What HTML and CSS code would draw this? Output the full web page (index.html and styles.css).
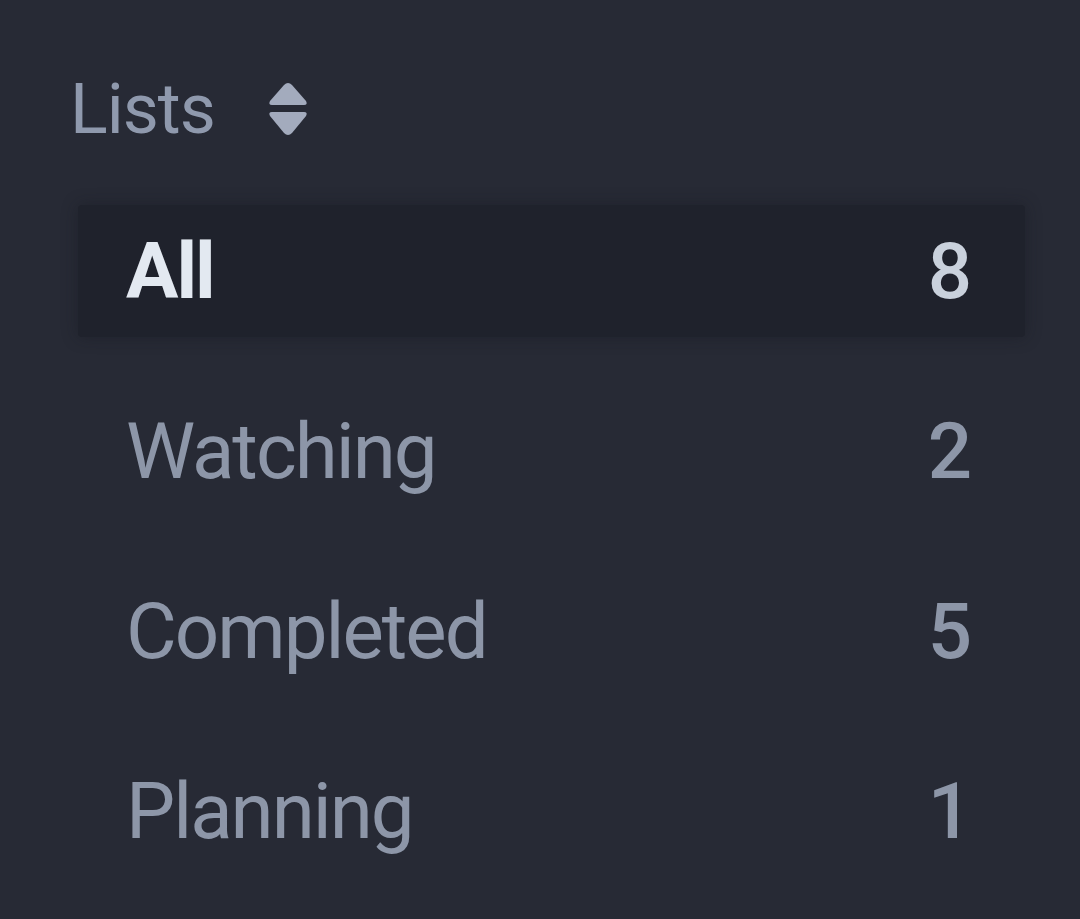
FILE: index.html
```html
<!DOCTYPE html>
<html lang="en">
<head>
  <meta charset="UTF-8" />
  <meta name="viewport" content="width=device-width, initial-scale=1" />
  <title>Lists</title>
  <link rel="stylesheet" href="styles.css">
</head>
<body>
  <aside class="sidebar">
    <div class="section-title">
      Lists
      <svg class="sort-icon" viewBox="0 0 42 54" aria-hidden="true">
        <path d="M21 1 Q23 1 25 3 L39 19 Q41 23 37 23 L5 23 Q1 23 3 19 L17 3 Q19 1 21 1 Z" />
        <path d="M5 30 L37 30 Q41 30 39 34 L25 51 Q23 53 21 53 Q19 53 17 51 L3 34 Q1 30 5 30 Z" />
      </svg>
    </div>

    <ul class="lists">
      <li class="list-item active"><span class="name">All</span><span class="count">8</span></li>
      <li class="list-item"><span class="name">Watching</span><span class="count">2</span></li>
      <li class="list-item"><span class="name">Completed</span><span class="count">5</span></li>
      <li class="list-item"><span class="name">Planning</span><span class="count">1</span></li>
    </ul>
  </aside>
</body>
</html>
```

FILE: styles.css
```css
* {
  box-sizing: border-box;
}
body {
  margin: 0;
  background-color: #272a35;
  font-family: Roboto, 'Liberation Sans', sans-serif;
  color: #8d96a8;
  min-height: 100vh;
  -webkit-font-smoothing: antialiased;
}
.sidebar {
  padding: 64px 55px 0 78px;
}
.section-title {
  display: flex;
  align-items: center;
  gap: 52px;
  margin-left: -8px;
  font-size: 70px;
  font-weight: 400;
  letter-spacing: -1px;
  color: #8f99ad;
  height: 90px;
}
.sort-icon {
  width: 42px;
  height: 54px;
  fill: #a3abbd;
}
.lists {
  list-style: none;
  margin: 51px 0 0;
  padding: 0;
}
.list-item {
  display: flex;
  justify-content: space-between;
  align-items: center;
  height: 132px;
  margin-bottom: 48px;
  padding: 0 55px 0 48px;
  font-size: 78px;
  letter-spacing: -2px;
  border-radius: 4px;
}
.list-item.active {
  background-color: #1f222c;
  box-shadow: 0 0 16px rgba(20, 22, 30, 0.4);
  color: #e3e9f1;
  font-weight: 700;
}
.count {
  font-weight: 500;
}
.list-item.active .count {
  color: #c9d1dc;
}
```
